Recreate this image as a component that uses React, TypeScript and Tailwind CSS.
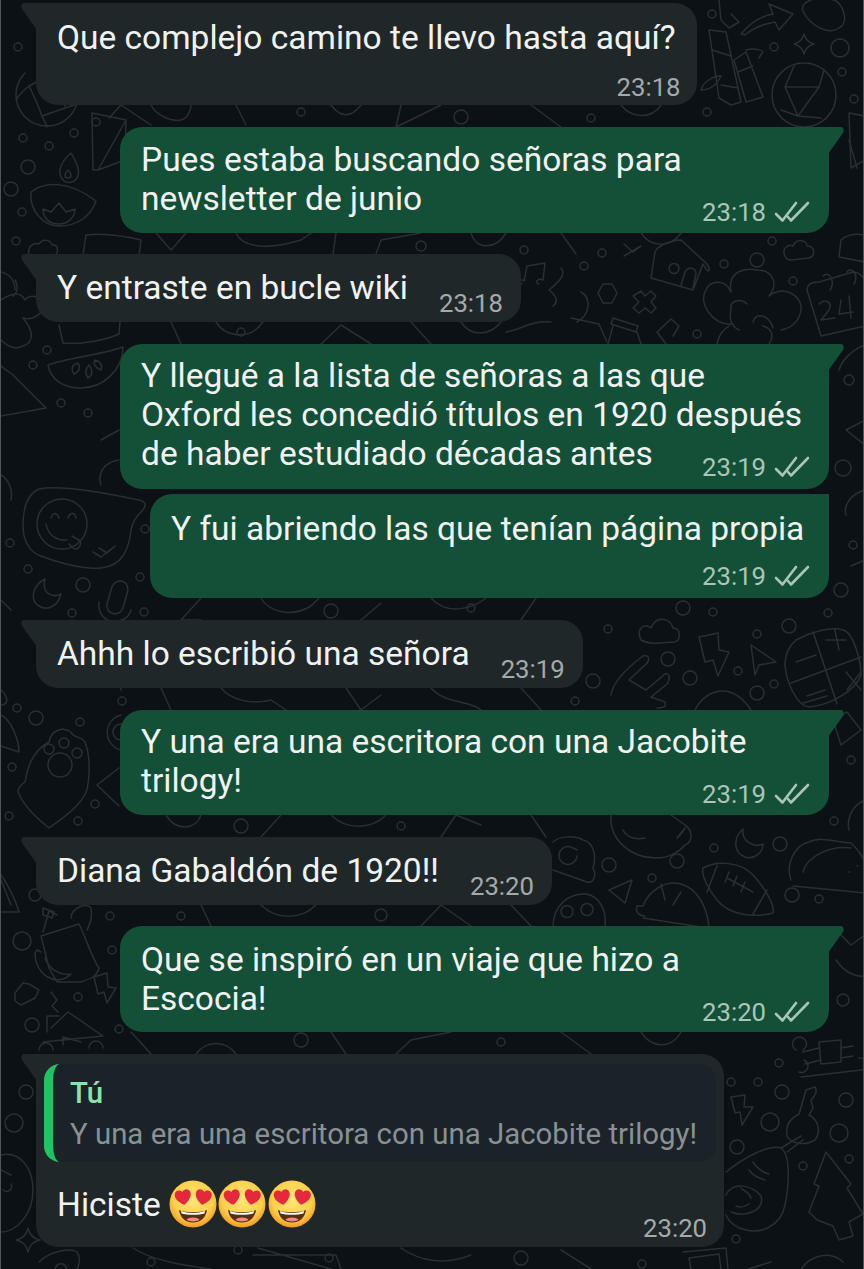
import React from 'react'

const circles: [number, number, number][] = [
  [17, 47, 4], [22, 138, 4], [48, 146, 4], [27, 167, 7], [10, 189, 7], [21, 212, 4], [15, 241, 4], [73, 133, 4],
  [32, 365, 4], [46, 350, 4], [60, 403, 4], [87, 413, 4], [9, 543, 4], [27, 569, 4], [82, 585, 7], [71, 613, 4],
  [139, 577, 4], [143, 612, 4], [144, 529, 4], [35, 718, 7], [16, 708, 4], [79, 722, 4], [11, 767, 4], [8, 816, 4],
  [77, 821, 4], [94, 804, 4], [121, 701, 4], [34, 895, 6], [109, 916, 4], [111, 950, 4], [21, 941, 9], [77, 997, 4],
  [31, 1025, 7], [118, 1029, 4], [25, 1092, 7], [13, 1123, 9],
  [839, 48, 9], [841, 72, 4], [853, 99, 4], [773, 47, 4], [706, 112, 4], [711, 14, 4], [771, 241, 4], [756, 260, 7],
  [723, 264, 4], [792, 281, 4], [696, 334, 4], [523, 250, 4], [601, 253, 4], [583, 266, 4],
  [682, 608, 7], [712, 612, 4], [607, 629, 4], [667, 659, 7], [689, 678, 7], [737, 671, 4], [756, 634, 4], [788, 626, 7],
  [827, 613, 4], [756, 693, 7], [773, 684, 4], [592, 681, 7], [574, 701, 4],
  [608, 865, 7], [676, 861, 7], [651, 878, 4], [713, 848, 4], [779, 844, 7], [791, 895, 7], [818, 899, 4], [833, 821, 4],
  [778, 1063, 4], [730, 1082, 4], [757, 1082, 4], [781, 1092, 7], [845, 1100, 7], [769, 1122, 9], [838, 1133, 9],
  [736, 1147, 7], [802, 1166, 4], [848, 1159, 4], [735, 1239, 4], [641, 1264, 4], [328, 1258, 4], [237, 1250, 4],
  [848, 380, 5], [842, 468, 8], [852, 545, 4], [840, 590, 7], [850, 760, 4], [842, 1000, 6], [95, 122, 4],
  [300, 112, 4], [460, 117, 7], [590, 118, 4], [240, 332, 4], [420, 246, 5], [470, 608, 4], [330, 611, 7], [400, 826, 4],
  [240, 826, 7], [180, 916, 4], [380, 915, 6], [500, 1042, 4], [300, 1040, 7], [150, 1262, 4], [520, 1258, 7],
]

const paths = [
  // left globe
  'M28 86 Q50 74 66 68 M28 86 Q36 102 41 116 M41 116 Q58 110 76 104 M28 86 Q20 92 15 100 M41 116 Q44 122 46 127 M52 66 Q60 90 64 106',
  'M77 95 A31 31 0 0 1 15 95 A31 31 0 0 1 24 73',
  // diya
  'M30 192 C45 180 70 182 95 201 C90 215 78 226 58 226 C42 226 28 210 30 192Z',
  'M42 209 L50 212 L58 203 L65 212 L74 209 C74 218 66 224 58 224 C48 224 42 218 42 209Z',
  'M70 153 C60 162 57 170 60 177 C64 185 74 184 77 176 C79 168 74 160 70 153Z',
  'M67 170 C63 174 63 178 67 178 C71 178 71 174 67 170Z',
  // triangle flag
  'M91 113 L125 120 L97 170 L92 170Z M125 120 L124 160 L97 170 M108 118 L120 105 L150 125',
  // cloud and book under row 3
  'M28 255 C26 246 33 242 38 244 C42 238 50 240 51 245 C57 244 58 252 54 255',
  'M82 255 L85 235 C100 233 125 236 140 240 L138 256',
  'M58 325 L62 343 C80 345 105 340 118 334 L119 322',
  // big puff left
  'M0 300 C12 292 20 292 24 300 C30 292 44 298 42 310 C36 318 28 320 22 318 C32 330 34 342 22 346 C14 350 6 346 0 340 M14 280 C18 286 16 294 12 296 M0 272 C8 274 14 280 14 290',
  // watermelon
  'M47 365 C65 358 100 355 122 347 C122 370 102 388 80 388 C62 388 50 380 47 365Z',
  'M73 374 C69 368 72 364 77 363 C80 368 78 372 73 374Z M87 378 C83 372 85 368 88 365 C92 370 92 375 87 378Z M100 370 C94 368 92 363 94 360 C99 361 102 365 100 370Z',
  // triangle below
  'M0 366 L12 375 L45 408 L0 416',
  // smiley bubble
  'M38 489 C60 484 110 494 138 500 C146 502 146 506 140 512 C134 518 131 524 130 530 C128 548 122 566 100 568 C80 570 50 560 40 556 C28 552 22 540 22 526 C22 508 26 494 38 489Z',
  'M86 524 A25 25 0 1 1 36 524 A25 25 0 1 1 86 524Z',
  'M45 524 C47 536 57 541 66 540 M50 518 C52 512 56 512 58 518 M67 518 C69 512 74 512 75 518',
  'M71 536 L78 540 C82 542 78 552 72 548 L68 544',
  'M92 552 L100 557 L114 546 M98 548 L106 553 L113 547',
  // moon and mic
  'M44 579 C32 585 28 600 38 606 C48 612 58 604 60 594 C52 598 40 594 44 579Z',
  'M110 590 C112 578 127 578 127 590 L122 608 C118 618 104 614 106 604Z M98 602 C97 612 102 620 112 622 C120 622 128 618 130 610',
  // paw shield
  'M48 742 C30 752 26 770 24 782 C18 786 16 790 18 794 C24 808 38 820 48 828 C62 818 80 806 86 790 C90 770 88 752 84 742 C80 736 72 738 70 732 C62 726 50 730 48 742Z',
  'M71 765 A12 12 0 1 1 47 765 A12 12 0 1 1 71 765Z M53 749 A5 5 0 1 1 43 749 A5 5 0 1 1 53 749Z M68 743 A5 5 0 1 1 58 743 A5 5 0 1 1 68 743Z M81 753 A5 5 0 1 1 71 753 A5 5 0 1 1 81 753Z',
  // target and triangle
  'M120 715 A18 18 0 0 0 120 750 M120 724 A8 8 0 0 0 120 740',
  'M96 785 L118 768 M96 785 L118 806',
  // slice left
  'M0 715 C10 720 18 740 18 752 L0 746',
  'M0 875 C10 890 16 905 18 912 L0 912 M0 880 L10 905',
  // bottle and bag
  'M42 932 L48 911 L56 915 M42 908 L53 912 L51 918 L42 915Z M40 936 L78 924 C84 936 92 960 98 968 C96 976 92 978 80 982 L56 982 L48 968 Z M70 918 C70 908 86 902 90 908 C92 920 88 926 86 930',
  'M34 953 C34 975 56 988 70 974 C60 976 48 970 44 958 M34 953 L36 950 L40 952',
  // lightning, blob, squiggle, house
  'M93 977 L106 973 L107 987 L115 988 L106 1003 L103 992 L97 994Z',
  'M14 993 L22 983 L28 984 L38 990 L34 998 L20 1005 L14 1001Z',
  'M50 992 L56 1000 L51 1006 L57 1012',
  'M46 1032 L46 1016 L58 1016 M50 1028 L67 1012 L102 1036 L42 1042 M62 1045 L62 1037 L80 1042 M38 1050 A7 7 0 1 1 52 1050 M88 1048 A7 7 0 1 1 102 1048',
  // bottom left
  'M27 1228 Q29 1238 39 1240 Q29 1242 27 1252 Q25 1242 15 1240 Q25 1238 27 1228Z',
  'M0 1155 C20 1150 32 1170 32 1190 C32 1215 15 1232 0 1232 M0 1170 L10 1175 M2 1190 C8 1194 12 1188 10 1184',
  'M38 1262 C50 1250 70 1248 76 1252 C80 1258 78 1265 76 1269 M54 1269 C56 1262 64 1262 66 1269',
  'M132 1248 C150 1260 180 1265 210 1269 M400 1248 C420 1262 445 1265 470 1255 M560 1250 L590 1269 M257 1248 L330 1269 M340 1269 L335 1255 L252 1255',
  // top right
  'M740 34 C750 22 760 16 772 14 L768 4 L792 14 L778 30 L774 22 C762 24 752 28 744 35Z M730 14 L738 22 L728 28 L720 20 L718 0',
  'M802 11 C808 24 826 36 838 28 C850 22 840 0 832 0 M810 0 C804 2 800 6 802 11',
  // bamboo
  'M708 30 L718 98 L730 105 L740 102 L725 32Z M711 50 L730 56 M720 85 L737 88 M745 52 L762 97 L745 102 L733 60 Z M737 72 L752 66 M700 90 C702 82 712 76 720 76 C716 84 710 90 700 90Z M745 50 C752 48 765 50 761 53 L758 58',
  // right globe
  'M835 95 A32 32 0 1 1 771 95 A32 32 0 1 1 835 95Z',
  'M784 87 L818 87 M784 87 L797 116 M818 87 L797 116 M784 87 L793 66 M818 87 L823 70 M797 116 L780 110 M797 116 L820 118',
  'M803 34 Q805 42 813 44 Q805 46 803 54 Q801 46 793 44 Q801 42 803 34Z',
  'M848 113 L864 116 M848 113 L850 168 L864 160 M848 140 L856 168',
  // clouds, boxes
  'M784 256 C780 248 788 244 792 246 C795 238 806 240 806 246 C814 246 815 256 808 258 L790 260 C787 260 785 258 784 256Z',
  'M838 257 L840 240 C848 233 858 234 864 235 M838 257 L864 262',
  // big flower
  'M732 324 C712 326 698 304 704 292 C708 280 724 278 730 292 C726 270 745 268 756 270 C772 270 778 284 768 296 C782 284 802 296 800 310 C798 322 790 328 780 330 M768 344 C774 336 770 328 762 326 M716 344 C718 334 722 330 728 326',
  'M730 310 C728 300 740 298 746 304 M738 330 C730 326 728 318 730 310 M752 322 C754 312 768 314 772 328',
  // calendar 24
  'M806 290 C806 284 812 282 818 282 L852 272 C860 272 864 280 864 282 M806 290 L820 336 L864 326 M822 276 A4 6 0 1 1 829 290 M846 272 A4 6 0 1 1 853 284',
  'M818 304 C824 298 832 302 828 310 L820 320 L834 318 M840 300 L838 314 L852 312 M848 296 L850 318',
  // music, tree, house, plus, hexagon
  'M526 266 L544 263 L542 280 M526 266 L523 281 M523 281 C520 278 514 282 521 284 M542 280 C538 278 532 282 538 284',
  'M560 268 C565 274 560 280 548 290 C555 295 558 302 552 306 M580 292 C590 298 590 314 576 322 M570 318 L598 324 L606 342 M505 332 C520 330 530 320 550 322',
  'M654 252 C656 246 670 240 680 240 L706 264 C710 270 708 276 702 264 L692 290 L650 278Z M668 268 A5 5 0 1 1 668 269 M680 285 L684 272 C688 265 695 268 695 274 L692 288',
  'M640 291 L644 296 L650 291 L655 296 L650 302 L655 308 L650 313 L644 308 L638 313 L632 308 L638 302 L632 296Z',
  'M597 293 L602 284 L611 284 L616 293 L611 303 L602 303Z',
  'M612 318 L637 326 L635 332 L610 324Z M612 326 L607 344 M636 332 L640 344 M665 344 L656 332 L670 319 L678 326 L672 336',
  'M623 244 L632 252 L640 246 M623 256 L640 246',
  // cloud, lightning, arrow at row 6
  'M640 640 C635 630 642 622 650 628 C655 615 670 618 672 628 C680 628 680 640 674 642 C664 642 650 646 640 640Z',
  'M698 637 L717 633 L718 650 L728 652 L717 676 L712 660 L704 662Z',
  'M750 645 L775 662 L758 665 L754 675Z',
  'M795 640 C810 632 830 626 842 630 C852 632 860 660 860 675 C855 690 830 705 808 707 C795 706 785 680 784 665 C784 655 788 646 795 640Z',
  'M812 632 L836 704 M790 683 L860 657 M795 662 L815 655 M825 640 L845 640 M834 630 L838 650 M845 672 L860 690 M860 672 L846 690 M806 696 L824 690 M802 703 L826 696',
  'M610 695 C612 680 630 665 642 656 C648 654 650 660 644 665 L628 680 M628 680 L645 690 L664 674 C668 672 670 678 666 684 L650 697 L664 702 C666 708 660 708 656 708',
  'M694 710 C704 690 730 680 750 710',
  // under row 1/2 gaps
  'M150 105 C155 115 170 122 180 120 C188 118 190 108 190 105 M235 105 L245 125 M330 105 C340 118 350 118 360 105 M400 105 L395 127 L420 115 L440 105 M530 105 L560 127 M620 105 C630 118 650 120 660 105',
  'M155 233 L170 250 L185 233 M235 233 C240 245 260 252 300 240 L310 233 M335 233 L332 254 M375 254 L380 240 L420 233 M470 233 C475 250 495 250 505 233 M560 233 L575 254 M640 233 C650 248 670 248 680 233',
  'M170 322 L180 344 M215 322 C225 338 250 340 262 322 M320 344 L340 325 L370 344 M410 322 L430 344 M460 322 C470 338 490 335 500 322',
  'M200 598 L180 620 L200 620 M260 598 C268 612 290 618 310 606 L318 598 M360 620 L380 603 M430 598 C445 615 470 610 485 598 M520 620 L535 598',
  'M160 688 L170 710 M220 688 C230 700 250 705 270 700 L285 710 M345 688 L360 710 L380 695 M430 688 C445 705 470 700 480 710 M520 688 L540 710',
  'M165 815 C175 832 195 830 200 815 M260 837 L280 815 M330 815 C345 830 370 830 385 815 M440 837 L455 815 L480 825 M530 815 L545 837',
  'M200 905 L210 926 M260 905 C275 920 300 920 315 905 M420 926 L440 905 L470 926 M510 905 L530 926',
  'M130 1032 L150 1054 M195 1054 C205 1040 225 1040 235 1054 M330 1032 L345 1054 M395 1054 L410 1040 L450 1032 M560 1032 L590 1054 M640 1032 C650 1048 670 1050 680 1032',
  // face, flower, moon, football, taco
  'M610 815 C608 840 630 858 655 858 C670 858 680 850 684 845 C692 842 692 830 684 825 L670 815',
  'M622 830 C626 838 636 840 644 838 M676 838 L684 828 L680 834Z',
  'M552 842 C560 835 575 836 582 840 C592 842 596 855 592 868 C596 876 592 884 586 882 L552 870',
  'M576 856 A9 9 0 1 1 572 848 L576 850',
  'M742 829 C732 838 732 852 744 857 C754 860 762 852 762 844 C754 848 740 842 742 829Z',
  'M702 868 C716 860 740 862 752 875 C764 888 774 905 772 913 C752 918 728 915 716 900 C708 890 700 876 702 868Z M716 866 L706 892 M766 890 L752 914 M726 878 L752 892 M728 872 L724 882 M736 876 L732 886 M744 882 L740 892',
  'M790 880 C784 864 794 845 808 842 C820 836 835 842 850 843 C858 850 864 860 864 865 M792 886 L864 893 M802 872 C806 856 830 845 850 848 M856 866 L857 866 M848 872 L849 872',
  'M608 890 L631 880 L624 903Z',
  'M636 906 L642 906 C648 890 665 880 680 884 C695 888 706 905 708 927 M642 918 L700 927 M660 884 L664 900 M680 892 L672 905 M636 906 C634 912 638 916 644 916',
  'M552 927 C552 905 568 893 585 894 C598 896 606 910 604 926 M572 912 A6 6 0 1 1 572 911 M592 910 A6 6 0 1 1 592 909',
  // avocado, key, tree, logs
  'M725 1172 C742 1158 768 1144 780 1148 C790 1155 788 1185 784 1205 C780 1226 760 1234 745 1230 C735 1228 728 1222 725 1215',
  'M752 1162 C756 1168 760 1172 768 1174 M748 1170 C752 1176 758 1178 764 1180 M725 1195 C732 1180 752 1186 760 1196 C764 1210 745 1218 730 1212 M740 1188 C744 1192 748 1192 750 1198 M735 1206 C740 1208 745 1206 748 1204',
  'M780 1148 L800 1136 M786 1152 L802 1140',
  'M805 1090 L814 1087 C816 1090 815 1095 810 1100 L812 1108 L808 1115 C818 1120 820 1132 814 1140 C804 1146 790 1144 786 1136 C784 1124 790 1118 798 1114Z',
  'M825 1152 L813 1184 L818 1186 L808 1212 L816 1220 L832 1226 L838 1240 L852 1236 L848 1222 L862 1214 L846 1188 L850 1184Z',
  'M795 1050 A7 7 0 1 1 802 1050 M798 1072 A6 6 0 1 0 803 1060 M818 1042 L840 1040 L840 1062 L820 1064Z M802 1052 L818 1048 M804 1064 L820 1060 M840 1048 L852 1046 M840 1058 L852 1056 M800 1077 L860 1070 A6 6 0 1 0 858 1058',
  'M730 1097 L744 1095 L743 1107 L752 1107 L741 1125 L739 1112 L734 1113Z',
  'M682 1252 L725 1248 L727 1269 M690 1269 L688 1258 L718 1254 L720 1269',
  'M747 1269 L770 1262 M800 1269 C810 1255 830 1250 842 1262',
  // right strip
  'M864 345 C850 350 840 362 838 370 M864 420 L845 430 L864 445 M864 490 C850 494 842 505 845 515 M864 560 L850 566 M832 720 L846 712 L860 730 L840 745 Z M864 800 C852 805 845 818 848 830 M835 930 L850 945 L864 935 M835 960 C845 975 860 978 864 975',
  // left of outgoing rows
  'M100 440 L118 430 M118 460 C104 462 96 472 100 485 M105 660 C112 672 118 680 120 690 M90 650 C98 640 110 632 120 630',
  'M0 475 C8 480 12 490 10 500 M0 600 L10 610 M0 690 C10 700 5 705 0 705',
]

function Doodles() {
  return (
    <svg className="absolute inset-0" width="864" height="1269" viewBox="0 0 864 1269" fill="none" stroke="#2a2f32" strokeWidth="1.5" strokeLinejoin="round" strokeLinecap="round">
      {circles.map(([cx, cy, r], i) => (
        <circle key={i} cx={cx} cy={cy} r={r} />
      ))}
      {paths.map((d, i) => (
        <path key={i} d={d} />
      ))}
    </svg>
  )
}

function Ticks() {
  return (
    <svg width="36" height="22" viewBox="0 0 36 22" fill="none" stroke="#a9c6b8" strokeWidth="2.600" strokeLinecap="round" strokeLinejoin="round">
      <path d="M2 13 L8.500 19.500 L22 2" />
      <path d="M14 16 L17 19.500 L34 2" />
    </svg>
  )
}

function Emoji() {
  return (
    <svg width="48" height="48" viewBox="0 0 48 48" className="shrink-0">
      <defs>
        <radialGradient id="face" cx="50%" cy="40%" r="60%">
          <stop offset="0%" stopColor="#ffe77a" />
          <stop offset="70%" stopColor="#fdcf4a" />
          <stop offset="100%" stopColor="#f09a1e" />
        </radialGradient>
      </defs>
      <circle cx="24" cy="24" r="23.500" fill="url(#face)" />
      <path d="M10 30 C16 33 32 33 38 30 C37 38 31 42.500 24 42.500 C17 42.500 11 38 10 30Z" fill="#5b2d12" />
      <path d="M12 31 C18 33.500 30 33.500 36 31 L35.500 33.500 C30 35.200 18 35.200 12.500 33.500Z" fill="#fff" />
      <path d="M17.500 39.800 C20 36.800 28 36.800 30.500 39.800 C28 42 20 42 17.500 39.800Z" fill="#f08a8a" />
      <path d="M14 25 C9 21.500 5.500 18 6 13.500 C6.500 9.500 11.500 8.500 14 12 C16.500 8.500 21.500 9.500 22 13.500 C22.500 18 19 21.500 14 25Z" fill="#e6283c" transform="rotate(-10 14 16)" />
      <path d="M34.500 25 C29.500 21.500 26 18 26.500 13.500 C27 9.500 32 8.500 34.500 12 C37 8.500 42 9.500 42.500 13.500 C43 18 39.500 21.500 34.500 25Z" fill="#e6283c" transform="rotate(10 34.500 16)" />
    </svg>
  )
}

function TailIn() {
  return (
    <svg className="absolute -left-[15px] top-0" width="16" height="27" viewBox="0 0 16 27">
      <path d="M3 0 H16 V27 L1 6 C-0.500 3.500 0.500 0 3 0Z" fill="#202729" />
    </svg>
  )
}

function TailOut() {
  return (
    <svg className="absolute -right-[15px] top-0" width="16" height="27" viewBox="0 0 16 27">
      <path d="M13 0 H0 V27 L15 6 C16.500 3.500 15.500 0 13 0Z" fill="#144f37" />
    </svg>
  )
}

function Time({ value, sent }: { value: string; sent?: boolean }) {
  return (
    <div className={sent ? 'flex h-[30px] items-center justify-end gap-2 text-[25.700px] leading-[30px] text-[#a9c6b8]' : 'flex h-[30px] items-center justify-end text-[25.700px] leading-[30px] text-[#a4aaac]'}>
      <span>{value}</span>
      {sent && <Ticks />}
    </div>
  )
}

function Sent({ children, time, className }: { children: React.ReactNode; time: string; className: string }) {
  return (
    <div className={'relative w-[709px] self-end rounded-[22px] rounded-tr-none bg-[#144f37] pl-[21px] pr-[19px] ' + className}>
      <TailOut />
      <div className="whitespace-nowrap">{children}</div>
      <div className="-mt-[21px]">
        <Time value={time} sent />
      </div>
    </div>
  )
}

function Inline({ children, time, className }: { children: React.ReactNode; time: string; className: string }) {
  return (
    <div className={'relative flex w-fit items-start gap-[31px] rounded-[22px] rounded-tl-none bg-[#202729] pb-[4px] pl-[21px] pr-[18px] pt-[14px] ' + className}>
      <TailIn />
      <span className="whitespace-nowrap">{children}</span>
      <div className="mt-[20px]">
        <Time value={time} />
      </div>
    </div>
  )
}

export default function App() {
  return (
    <div className="relative h-[1269px] w-[864px] overflow-hidden border-x border-x-[#50565a] bg-[#0b1115] font-['Roboto',sans-serif] text-[33.500px] leading-[39px] text-[#f0f2f2]">
      <Doodles />
      <div className="relative -mx-px flex flex-col pl-[36px] pr-[35px] pt-[3px]">
        <div className="relative w-fit rounded-[22px] rounded-tl-none bg-[#202729] px-[21px] pb-[3px] pt-[15px]">
          <TailIn />
          <div className="whitespace-nowrap">Que complejo camino te llevo hasta aquí?</div>
          <div className="-mr-[5px] mt-[15px]">
            <Time value="23:18" />
          </div>
        </div>

        <Sent time="23:18" className="mt-[22px] pb-[6px] pt-[13px]">
          Pues estaba buscando señoras para
          <br />
          newsletter de junio
        </Sent>

        <Inline time="23:18" className="mt-[21px]">Y entraste en bucle wiki</Inline>

        <Sent time="23:19" className="mt-[22px] pb-[7px] pt-[12px]">
          Y llegué a la lista de señoras a las que
          <br />
          Oxford les concedió títulos en 1920 después
          <br />
          de haber estudiado décadas antes
        </Sent>

        <div className="relative mt-[5px] w-[679px] self-end rounded-[22px] rounded-tr-none bg-[#144f37] pb-[7px] pl-[21px] pr-[19px] pt-[15px]">
          <div className="whitespace-nowrap">Y fui abriendo las que tenían página propia</div>
          <div className="mt-[13px]">
            <Time value="23:19" sent />
          </div>
        </div>

        <Inline time="23:19" className="mt-[22px]">Ahhh lo escribió una señora</Inline>

        <Sent time="23:19" className="mt-[22px] pb-[6px] pt-[12px]">
          Y una era una escritora con una Jacobite
          <br />
          trilogy!
        </Sent>

        <Inline time="23:20" className="mt-[22px]">Diana Gabaldón de 1920!!</Inline>

        <Sent time="23:20" className="mt-[21px] pb-[5px] pt-[14px]">
          Que se inspiró en un viaje que hizo a
          <br />
          Escocia!
        </Sent>

        <div className="relative mt-[22px] w-[688px] rounded-[22px] rounded-tl-none bg-[#202729] pb-[4px] pl-[8px] pr-[8px] pt-[10px]">
          <TailIn />
          <div className="h-[98px] overflow-hidden rounded-[16px] border-l-[9px] border-l-[#1fc565] bg-[#1b2329] pl-[17px] pt-[11px] text-[29.400px] leading-[36px]">
            <div className="font-medium text-[#8fe0ae]">Tú</div>
            <div className="mt-[5px] whitespace-nowrap text-[#899195]">Y una era una escritora con una Jacobite trilogy!</div>
          </div>
          <div className="mt-[18px] flex items-center gap-[8px] pl-[13px]">
            <span>Hiciste</span>
            <div className="flex gap-[1.500px]">
              <Emoji />
              <Emoji />
              <Emoji />
            </div>
          </div>
          <div className="-mt-[15px] pr-[9px]">
            <Time value="23:20" />
          </div>
        </div>
      </div>
    </div>
  )
}
